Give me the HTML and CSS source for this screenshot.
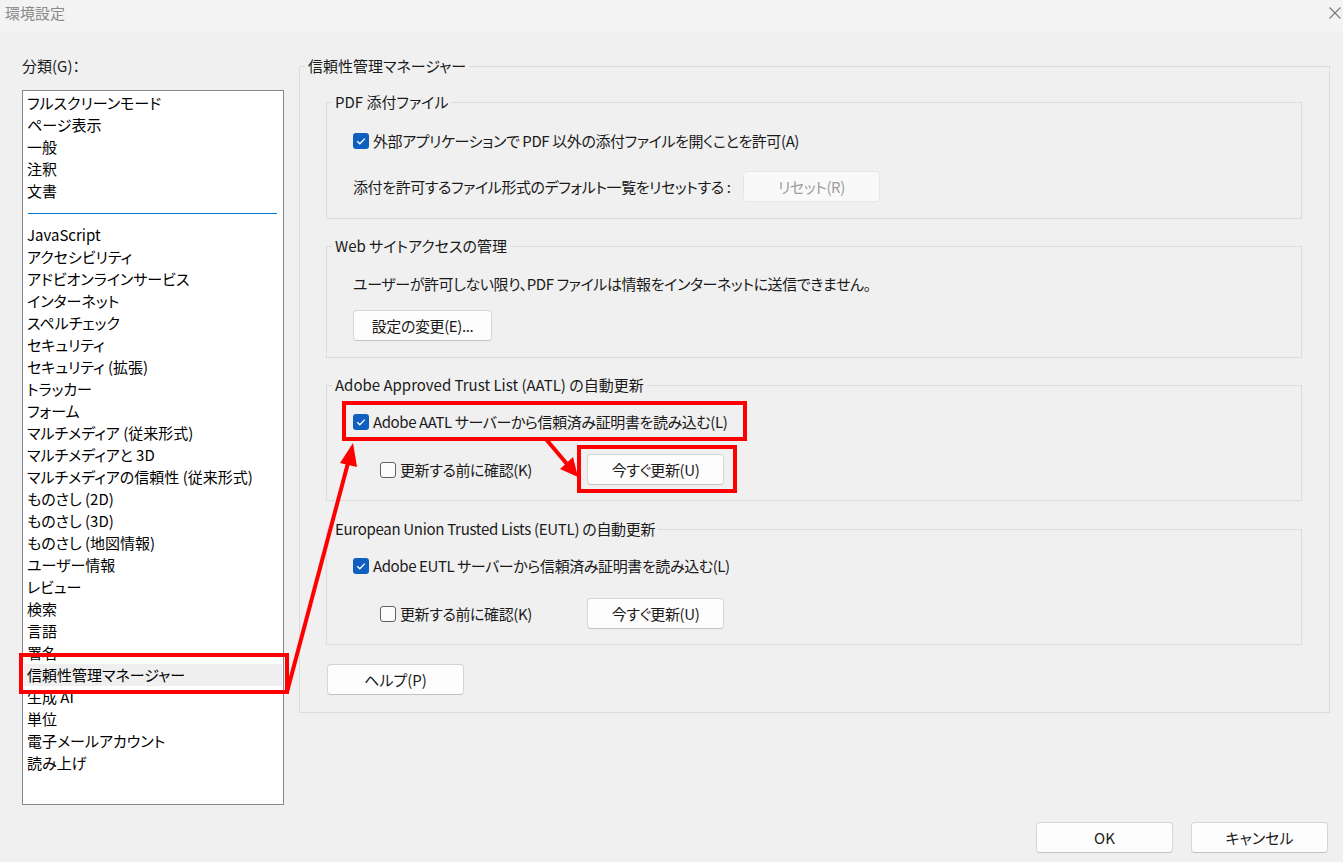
FILE: index.html
```html
<!DOCTYPE html>
<html lang="ja">

<head>
    <meta charset="UTF-8">
    <title>環境設定</title>
    <link rel="stylesheet" href="styles.css">
</head>

<body>
    <div class="titlebar">
        <span class="title">環境設定</span>
        <svg class="close" width="12" height="12" viewBox="0 0 12 12">
            <path d="M0.5 0.5 L11.5 11.5 M11.5 0.5 L0.5 11.5" stroke="#7a7a7a" stroke-width="1.1" fill="none" />
        </svg>
    </div>

    <div class="main">
        <div class="sidebar">
            <div class="side-label">分類(G)：</div>
            <div class="list">
                <div class="item">フルスクリーンモード</div>
                <div class="item">ページ表示</div>
                <div class="item">一般</div>
                <div class="item">注釈</div>
                <div class="item">文書</div>
                <div class="sep"></div>
                <div class="item">JavaScript</div>
                <div class="item">アクセシビリティ</div>
                <div class="item">アドビオンラインサービス</div>
                <div class="item">インターネット</div>
                <div class="item">スペルチェック</div>
                <div class="item">セキュリティ</div>
                <div class="item">セキュリティ (拡張)</div>
                <div class="item">トラッカー</div>
                <div class="item">フォーム</div>
                <div class="item">マルチメディア (従来形式)</div>
                <div class="item">マルチメディアと 3D</div>
                <div class="item">マルチメディアの信頼性 (従来形式)</div>
                <div class="item">ものさし (2D)</div>
                <div class="item">ものさし (3D)</div>
                <div class="item">ものさし (地図情報)</div>
                <div class="item">ユーザー情報</div>
                <div class="item">レビュー</div>
                <div class="item">検索</div>
                <div class="item">言語</div>
                <div class="item">署名</div>
                <div class="item selected">信頼性管理マネージャー</div>
                <div class="item">生成 AI</div>
                <div class="item">単位</div>
                <div class="item">電子メールアカウント</div>
                <div class="item">読み上げ</div>
            </div>
        </div>

        <div class="content">
            <fieldset class="group outer">
                <legend>信頼性管理マネージャー</legend>
                <div class="outer-body">

                    <fieldset class="group pdf">
                        <legend>PDF 添付ファイル</legend>
                        <div class="group-body">
                            <div class="row">
                                <span class="check on"><svg width="16" height="16" viewBox="0 0 16 16"><path d="M4.2 8.3 L6.8 10.8 L11.8 5.6" stroke="#fff" stroke-width="1.3" fill="none" /></svg></span>
                                <span>外部アプリケーションで PDF 以外の添付ファイルを開くことを許可(A)</span>
                            </div>
                            <div class="row">
                                <span class="reset-label">添付を許可するファイル形式のデフォルト一覧をリセットする :</span>
                                <span class="btn disabled">リセット(R)</span>
                            </div>
                        </div>
                    </fieldset>

                    <fieldset class="group web">
                        <legend>Web サイトアクセスの管理</legend>
                        <div class="group-body">
                            <div class="row">
                                <span>ユーザーが許可しない限り、PDF ファイルは情報をインターネットに送信できません。</span>
                            </div>
                            <div class="row">
                                <span class="btn wide">設定の変更(E)...</span>
                            </div>
                        </div>
                    </fieldset>

                    <fieldset class="group trust">
                        <legend>Adobe Approved Trust List (AATL) の自動更新</legend>
                        <div class="group-body">
                            <div class="row">
                                <span class="check on"><svg width="16" height="16" viewBox="0 0 16 16"><path d="M4.2 8.3 L6.8 10.8 L11.8 5.6" stroke="#fff" stroke-width="1.3" fill="none" /></svg></span>
                                <span>Adobe AATL サーバーから信頼済み証明書を読み込む(L)</span>
                            </div>
                            <div class="row sub">
                                <span class="sub-label"><span class="check"></span><span>更新する前に確認(K)</span></span>
                                <span class="btn">今すぐ更新(U)</span>
                            </div>
                        </div>
                    </fieldset>

                    <fieldset class="group trust eutl">
                        <legend>European Union Trusted Lists (EUTL) の自動更新</legend>
                        <div class="group-body">
                            <div class="row">
                                <span class="check on"><svg width="16" height="16" viewBox="0 0 16 16"><path d="M4.2 8.3 L6.8 10.8 L11.8 5.6" stroke="#fff" stroke-width="1.3" fill="none" /></svg></span>
                                <span>Adobe EUTL サーバーから信頼済み証明書を読み込む(L)</span>
                            </div>
                            <div class="row sub">
                                <span class="sub-label"><span class="check"></span><span>更新する前に確認(K)</span></span>
                                <span class="btn">今すぐ更新(U)</span>
                            </div>
                        </div>
                    </fieldset>

                    <div class="help-row">
                        <span class="btn help">ヘルプ(P)</span>
                    </div>
                </div>
            </fieldset>
        </div>
    </div>

    <div class="footer">
        <span class="btn">OK</span>
        <span class="btn">キャンセル</span>
    </div>

    <!-- annotation marks drawn over the dialog -->
    <svg class="marks" width="1343" height="862" viewBox="0 0 1343 862">
        <g fill="none" stroke="#ff0000" stroke-width="4">
            <rect x="21" y="655" width="266" height="37" />
            <rect x="344" y="403" width="401" height="36" />
            <rect x="579" y="447" width="156" height="44" />
            <line x1="287" y1="692" x2="348" y2="463" />
            <line x1="545" y1="438" x2="567" y2="464" />
        </g>
        <g fill="#ff0000">
            <polygon points="353,443 340,463 357,467" />
            <polygon points="578,477 573,457 560,469" />
        </g>
    </svg>
</body>

</html>
```

FILE: styles.css
```css
body {
    position: relative;
    width: 1343px;
    height: 862px;
    margin: 0;
    overflow: hidden;
    background-color: #f0f0f0;
    color: #1a1a1a;
    font-family: "Noto Sans CJK JP", "Noto Sans", sans-serif;
    font-size: 15px;
    line-height: 22px;
    font-feature-settings: "palt";
}

.titlebar {
    display: flex;
    justify-content: space-between;
    align-items: center;
    height: 32px;
    padding: 0 2px 0 5px;
    box-sizing: border-box;
    background-color: #f3f3f3;
}

.title {
    color: #8a8a8a;
    margin-top: -6px;
}

.close {
    margin-top: -7px;
}

.main {
    display: flex;
    height: 773px;
    padding: 23px 0 0 22px;
    box-sizing: border-box;
}

.sidebar {
    width: 262px;
    margin-right: 15px;
}

.side-label {
    height: 22px;
    margin-bottom: 13px;
}

.list {
    height: 715px;
    box-sizing: border-box;
    border: 1px solid #828790;
    padding: 1px;
    background-color: #fff;
    color: #000;
}

.item {
    height: 22px;
    padding-left: 3px;
    white-space: nowrap;
}

.item.selected {
    background-color: #efefef;
}

.sep {
    height: 22px;
    display: flex;
    align-items: center;
    padding: 0 5px 0 4px;
}

.sep::before {
    content: "";
    flex: 1;
    height: 1px;
    background-color: #0078d7;
}

.content {
    width: 1031px;
}

.group {
    margin: 0;
    padding: 0;
    border: 1px solid #dcdcdc;
    min-width: 0;
}

.group legend {
    margin-left: 5px;
    padding: 0 3px;
    line-height: 22px;
}

.eutl legend {
    letter-spacing: -0.3px;
}

.outer-body {
    padding: 14px 27px 17px 26px;
}

.group-body {
    padding: 10px 26px 15px 26px;
    display: flex;
    flex-direction: column;
    gap: 17px;
    letter-spacing: -0.4px;
}

.pdf .group-body {
    padding-top: 12px;
    padding-bottom: 16px;
    gap: 15px;
}

.web {
    margin-top: 16px;
}

.web .group-body {
    padding-top: 11px;
    padding-bottom: 16px;
    gap: 11px;
}

.trust {
    margin-top: 16px;
}

.eutl {
    margin-top: 17px;
}

.row {
    display: flex;
    align-items: center;
    height: 31px;
    white-space: nowrap;
}

.row.sub {
    padding-left: 27px;
}

.sub-label {
    display: flex;
    align-items: center;
    width: 207px;
}

.reset-label {
    width: 390px;
}

.check {
    display: inline-flex;
    width: 16px;
    height: 16px;
    box-sizing: border-box;
    border: 1px solid #616161;
    border-radius: 3px;
    background-color: #fbfbfb;
    margin-right: 4px;
}

.check.on {
    border: none;
    background-color: #0f5fc0;
}

.btn {
    display: inline-flex;
    justify-content: center;
    align-items: center;
    width: 137px;
    height: 31px;
    box-sizing: border-box;
    border: 1px solid #d5d5d5;
    border-bottom-color: #c2c2c2;
    border-radius: 4px;
    background-color: #fdfdfd;
    color: #1a1a1a;
}

.btn.disabled {
    background-color: #f9f9f9;
    border-color: #e6e6e6;
    color: #9d9d9d;
}

.btn.wide {
    width: 139px;
}

.help-row {
    margin-top: 19px;
    padding-left: 1px;
    display: flex;
}

.footer {
    display: flex;
    justify-content: flex-end;
    gap: 18px;
    padding: 17px 15px 0 0;
}

.marks {
    position: absolute;
    top: 0;
    left: 0;
    pointer-events: none;
}
```
